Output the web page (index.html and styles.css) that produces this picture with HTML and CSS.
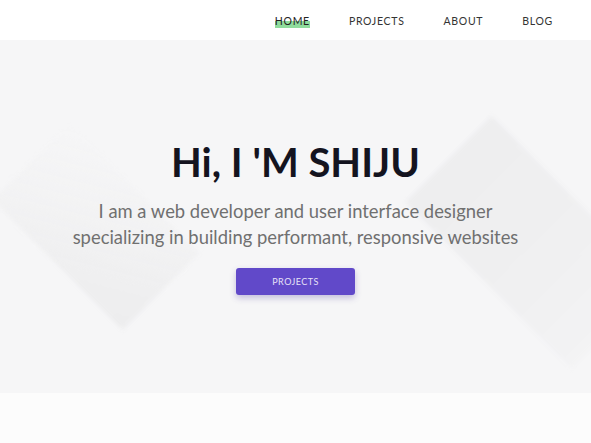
FILE: index.html
```html
<!DOCTYPE html>
<html lang="en">
<head>
<meta charset="utf-8">
<title>Shiju</title>
<link rel="stylesheet" href="styles.css">
</head>
<body>
<header class="topbar">
  <nav class="nav">
    <a class="nav-link active" href="#">HOME</a>
    <a class="nav-link" href="#">PROJECTS</a>
    <a class="nav-link" href="#">ABOUT</a>
    <a class="nav-link" href="#">BLOG</a>
  </nav>
</header>
<section class="hero">
  <div class="shape shape-left"></div>
  <div class="shape shape-right"></div>
  <div class="hero-content">
    <h1 class="title">Hi, I 'M SHIJU</h1>
    <p class="subtitle">I am a web developer and user interface designer<br>specializing in building performant, responsive websites</p>
    <a class="btn" href="#">PROJECTS</a>
  </div>
</section>
<section class="next"></section>
</body>
</html>
```
FILE: styles.css
```css
* { box-sizing: border-box; }
html, body { margin: 0; padding: 0; }
body {
  font-family: Lato, "Open Sans", sans-serif;
  background: #fdfdfd;
  overflow: hidden;
  height: 443px;
}
.topbar {
  height: 40px;
  background: #ffffff;
  display: flex;
  justify-content: flex-end;
  align-items: center;
  padding-right: 38px;
  position: relative;
  z-index: 2;
}
.nav {
  display: flex;
  gap: 39px;
  align-items: center;
}
.nav-link {
  font-size: 10.5px;
  letter-spacing: 0.7px;
  color: #333;
  text-decoration: none;
  line-height: 14px;
  padding-top: 1px;
}
.nav-link.active {
  background: linear-gradient(to bottom, transparent 55%, #8fdc9c 55%, #8fdc9c 100%);
  color: #222;
}
.hero {
  position: relative;
  height: 353px;
  background: #f6f6f7;
  overflow: hidden;
  display: flex;
  align-items: center;
  justify-content: center;
}
.shape {
  position: absolute;
  transform: rotate(45deg);
  filter: blur(2px);
}
.shape-left {
  width: 184px;
  height: 109px;
  left: 4px;
  top: 132px;
  background: linear-gradient(to bottom right, rgba(246,246,247,0) 0%, rgba(240,240,241,0.6) 45%, #efeff0 75%, #ededee 100%);
}
.shape-right {
  width: 235px;
  height: 122px;
  left: 414px;
  top: 141px;
  background: linear-gradient(to right, #eeeeef 0%, #f0f0f1 60%, #f3f3f4 100%);
}
.hero-content {
  position: relative;
  z-index: 1;
  display: flex;
  flex-direction: column;
  align-items: center;
  text-align: center;
}
.title {
  margin: 0;
  font-size: 40px;
  font-weight: 700;
  color: #14141f;
  line-height: 48px;
}
.subtitle {
  margin: 12px 0 0;
  font-size: 18.4px;
  line-height: 26px;
  color: #707070;
}
.btn {
  margin-top: 18px;
  width: 119px;
  height: 27px;
  display: flex;
  align-items: center;
  justify-content: center;
  background: #6149c9;
  color: #e6e1f7;
  border-radius: 3px;
  font-size: 9px;
  letter-spacing: 0.45px;
  text-decoration: none;
  box-shadow: 0 3px 6px rgba(80, 60, 160, 0.3);
}
.next {
  height: 50px;
  background: #fcfcfc;
  box-shadow: 0 -1px 2px rgba(0,0,0,0.04);
}
```
